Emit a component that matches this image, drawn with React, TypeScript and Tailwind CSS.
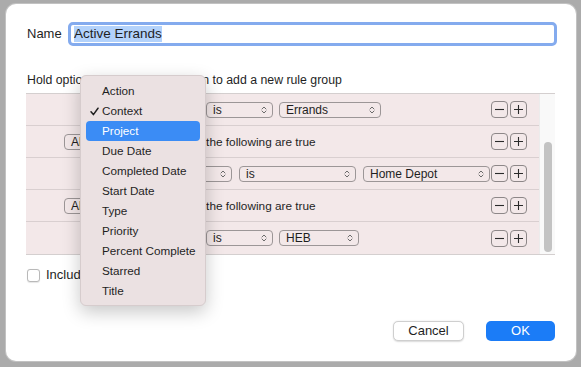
import React from 'react';

const font = "font-['Liberation_Sans',Arial,sans-serif]";

const Chevrons: React.FC = () => (
  <svg width="6" height="10" viewBox="0 0 6 10" className="shrink-0">
    <path d="M1 4 L3 2 L5 4 M1 6 L3 8 L5 6" fill="none" stroke="#6b6b6b" strokeWidth="1" strokeLinecap="round" strokeLinejoin="round" />
  </svg>
);

interface PopupProps {
  label: string;
  width: string;
  className?: string;
}

const Popup: React.FC<PopupProps> = ({ label, width, className = '' }) => (
  <div className={`${width} ${className} h-[16px] rounded-[4px] border border-[#9c9697] flex items-center justify-between pl-[6px] pr-[5px] shrink-0`}>
    <span className="text-[12px] leading-[14px] text-[#1f1f1f]">{label}</span>
    <Chevrons />
  </div>
);

const RowButtons: React.FC = () => (
  <div className="ml-auto flex gap-[2px] shrink-0">
    <div className="w-[17px] h-[17px] rounded-[4px] border border-[#8d8788] flex items-center justify-center">
      <svg width="11" height="11" viewBox="0 0 11 11">
        <path d="M1 5.5 H10" stroke="#2a2a2a" strokeWidth="1.1" />
      </svg>
    </div>
    <div className="w-[17px] h-[17px] rounded-[4px] border border-[#8d8788] flex items-center justify-center">
      <svg width="11" height="11" viewBox="0 0 11 11">
        <path d="M1 5.5 H10 M5.5 1 V10" stroke="#2a2a2a" strokeWidth="1.1" />
      </svg>
    </div>
  </div>
);

const menuItems = [
  'Action',
  'Context',
  'Project',
  'Due Date',
  'Completed Date',
  'Start Date',
  'Type',
  'Priority',
  'Percent Complete',
  'Starred',
  'Title',
];

export default function App() {
  return (
    <div className={`${font} w-[581px] h-[367px] bg-[#ababab] pt-[4px] pl-[6px] pr-[5px] overflow-hidden`}>
      <div className="relative w-[570px] h-[357px] bg-white rounded-[10px] shadow-[0_0_0_1px_#c2c2c2] flex flex-col text-[#1f1f1f]">
        {/* name field */}
        <div className="flex items-center mt-[18px] ml-[21px]">
          <span className="w-[41px] text-[13px] leading-[16px]">Name</span>
          <div className="w-[489px] h-[24px] rounded-[5px] border-[3px] border-[#84abee] flex items-center pl-[3px]">
            <span className="bg-[#b3d2fb] text-[13.5px] leading-[16px]">Active Errands</span>
          </div>
        </div>

        <p className="ml-[21px] mt-[26px] text-[12.3px] leading-[16px]">
          Hold option and click the + button to add a new rule group
        </p>

        {/* rule editor */}
        <div className="ml-[20px] mt-[5px] w-[529px] flex border-t border-b border-[#d4cfcf]">
          <div className="w-[513px] flex flex-col bg-[#f3e8e9]">
            <div className="h-[32px] flex items-center border-b border-[#d9cfd0] pr-[12px]">
              <Popup label="Context" width="w-[78px]" className="ml-[95px]" />
              <Popup label="is" width="w-[67px]" className="ml-[7px]" />
              <Popup label="Errands" width="w-[102px]" className="ml-[6px]" />
              <RowButtons />
            </div>
            <div className="h-[32px] flex items-center border-b border-[#d9cfd0] pr-[12px]">
              <Popup label="All" width="w-[52px]" className="ml-[38px]" />
              <span className="ml-[77px] text-[11.8px] leading-[14px]">of the following are true</span>
              <RowButtons />
            </div>
            <div className="h-[32px] flex items-center border-b border-[#d9cfd0] pr-[12px]">
              <Popup label="Project" width="w-[92px]" className="ml-[114px]" />
              <Popup label="is" width="w-[117px]" className="ml-[7px]" />
              <Popup label="Home Depot" width="w-[127px]" className="ml-[7px]" />
              <RowButtons />
            </div>
            <div className="h-[32px] flex items-center border-b border-[#d9cfd0] pr-[12px]">
              <Popup label="All" width="w-[52px]" className="ml-[38px]" />
              <span className="ml-[77px] text-[11.8px] leading-[14px]">of the following are true</span>
              <RowButtons />
            </div>
            <div className="h-[32px] flex items-center pr-[12px]">
              <Popup label="Context" width="w-[78px]" className="ml-[95px]" />
              <Popup label="is" width="w-[67px]" className="ml-[7px]" />
              <Popup label="HEB" width="w-[80px]" className="ml-[6px]" />
              <RowButtons />
            </div>
          </div>
          <div className="w-[16px] bg-[#f9f9f9] border-l border-[#ececec] flex flex-col items-center">
            <div className="mt-[48px] w-[8px] h-[110px] rounded-full bg-[#c3c3c3]" />
          </div>
        </div>

        {/* checkbox */}
        <div className="flex items-center ml-[21px] mt-[12px]">
          <div className="w-[13px] h-[13px] rounded-[3px] border border-[#b9b9b9] bg-white shadow-[0_0.5px_1px_rgba(0,0,0,0.1)]" />
          <span className="ml-[6px] text-[13px] leading-[16px]">Include completed</span>
        </div>

        {/* buttons */}
        <div className="mt-auto mb-[20px] mr-[21px] flex justify-end items-center gap-[22px]">
          <div className="w-[71px] h-[20px] rounded-[5px] bg-white border border-[#cfcfcf] shadow-[0_0.5px_1.5px_rgba(0,0,0,0.15)] flex items-center justify-center text-[13px] leading-[16px]">
            Cancel
          </div>
          <div className="w-[69px] h-[20px] rounded-[5px] bg-[#1b7cf7] flex items-center justify-center text-[13px] leading-[16px] text-white">
            OK
          </div>
        </div>

        {/* popup menu */}
        <div className="absolute left-[74px] top-[71px] w-[126px] h-[231px] rounded-[6px] bg-[#ebe1e2] border border-[#d6cccd] shadow-[0_6px_18px_rgba(0,0,0,0.22)] pt-[5px]">
          {menuItems.map((item) => {
            const selected = item === 'Project';
            const checked = item === 'Context';
            return (
              <div
                key={item}
                className={`mx-[5px] h-[20px] rounded-[4px] flex items-center ${selected ? 'bg-[#3b8cf5] text-white' : 'text-[#1f1f1f]'}`}
              >
                <span className="w-[16px] flex justify-center shrink-0">
                  {checked && (
                    <svg width="9" height="9" viewBox="0 0 9 9">
                      <path d="M1 4.8 L3.4 7.6 L8 1.2" fill="none" stroke="#1f1f1f" strokeWidth="1.5" strokeLinecap="round" strokeLinejoin="round" />
                    </svg>
                  )}
                </span>
                <span className="text-[11.7px] leading-[14px]">{item}</span>
              </div>
            );
          })}
        </div>
      </div>
    </div>
  );
}
